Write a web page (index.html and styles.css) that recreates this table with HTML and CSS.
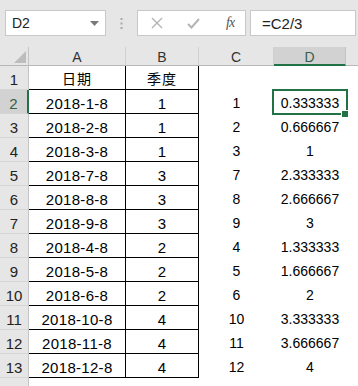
FILE: index.html
```html
<!DOCTYPE html>
<html lang="zh">
<head>
<meta charset="utf-8">
<link rel="stylesheet" href="styles.css">
</head>
<body>
<div class="toolbar">
  <div class="namebox"><span>D2</span><svg class="caret" width="9" height="5" viewBox="0 0 9 5"><path d="M0 0h9L4.5 5z" fill="#7a7a7a"/></svg></div>
  <div class="sep"><svg width="3" height="11" viewBox="0 0 3 11"><rect x="0.5" y="0" width="2" height="2" fill="#a8a8a8"/><rect x="0.5" y="4.5" width="2" height="2" fill="#a8a8a8"/><rect x="0.5" y="9" width="2" height="2" fill="#a8a8a8"/></svg></div>
  <div class="btns">
    <svg class="ico" width="12" height="12" viewBox="0 0 12 12"><path d="M1 1L11 11M11 1L1 11" stroke="#b4b4b4" stroke-width="1.4" fill="none"/></svg>
    <svg class="ico chk" width="13" height="11" viewBox="0 0 13 11"><path d="M1 6L4.5 9.5L12 1" stroke="#b4b4b4" stroke-width="2" fill="none"/></svg>
    <span class="fx">fx</span>
  </div>
  <div class="formula">=C2/3</div>
</div>
<div class="grid">
  <div class="corner"><svg width="12" height="12" viewBox="0 0 12 12"><path d="M12 0V12H0z" fill="#bdbdbd"/></svg></div>
  <div class="ch">A</div><div class="ch">B</div><div class="ch">C</div><div class="ch sel">D</div><div class="ch last"></div>

  <div class="rh">1</div><div class="c t cj">日期</div><div class="c t cj">季度</div><div class="c n"></div><div class="c n"></div><div class="c"></div>
  <div class="rh sel">2</div><div class="c t d">2018-1-8</div><div class="c t">1</div><div class="c n">1</div><div class="c n active">0.333333<span class="handle"></span></div><div class="c"></div>
  <div class="rh">3</div><div class="c t d">2018-2-8</div><div class="c t">1</div><div class="c n">2</div><div class="c n">0.666667</div><div class="c"></div>
  <div class="rh">4</div><div class="c t d">2018-3-8</div><div class="c t">1</div><div class="c n">3</div><div class="c n">1</div><div class="c"></div>
  <div class="rh">5</div><div class="c t d">2018-7-8</div><div class="c t">3</div><div class="c n">7</div><div class="c n">2.333333</div><div class="c"></div>
  <div class="rh">6</div><div class="c t d">2018-8-8</div><div class="c t">3</div><div class="c n">8</div><div class="c n">2.666667</div><div class="c"></div>
  <div class="rh">7</div><div class="c t d">2018-9-8</div><div class="c t">3</div><div class="c n">9</div><div class="c n">3</div><div class="c"></div>
  <div class="rh">8</div><div class="c t d">2018-4-8</div><div class="c t">2</div><div class="c n">4</div><div class="c n">1.333333</div><div class="c"></div>
  <div class="rh">9</div><div class="c t d">2018-5-8</div><div class="c t">2</div><div class="c n">5</div><div class="c n">1.666667</div><div class="c"></div>
  <div class="rh">10</div><div class="c t d">2018-6-8</div><div class="c t">2</div><div class="c n">6</div><div class="c n">2</div><div class="c"></div>
  <div class="rh">11</div><div class="c t d">2018-10-8</div><div class="c t">4</div><div class="c n">10</div><div class="c n">3.333333</div><div class="c"></div>
  <div class="rh">12</div><div class="c t d">2018-11-8</div><div class="c t">4</div><div class="c n">11</div><div class="c n">3.666667</div><div class="c"></div>
  <div class="rh">13</div><div class="c t d">2018-12-8</div><div class="c t">4</div><div class="c n">12</div><div class="c n">4</div><div class="c"></div>
  <div class="rh"></div><div class="c"></div><div class="c"></div><div class="c"></div><div class="c"></div><div class="c"></div>
</div>
</body>
</html>
```
FILE: styles.css
```css
html, body {
  margin: 0;
  padding: 0;
  background: #e6e6e6;
  overflow: hidden;
}
body {
  width: 358px;
  height: 386px;
  font-family: "Liberation Sans", "Noto Sans CJK SC", sans-serif;
  color: #000;
}
.toolbar {
  height: 47px;
  box-sizing: border-box;
  padding: 10px 2px 0 5px;
  display: flex;
  align-items: flex-start;
}
.namebox {
  width: 101px;
  height: 26px;
  box-sizing: border-box;
  background: #fff;
  border: 1px solid #c8c8c8;
  display: flex;
  align-items: center;
  justify-content: space-between;
  padding: 0 6px 0 6px;
  font-size: 14px;
  color: #222;
}
.caret { margin-top: 1px; }
.sep {
  width: 31px;
  height: 26px;
  display: flex;
  align-items: center;
  justify-content: center;
}
.btns {
  width: 109px;
  height: 26px;
  box-sizing: border-box;
  background: #fff;
  border: 1px solid #c8c8c8;
  display: flex;
  align-items: center;
  padding-left: 13px;
}
.ico { display: block; }
.chk { margin-left: 24px; }
.fx {
  margin-left: 26px;
  font-family: "Liberation Serif", serif;
  font-style: italic;
  font-size: 14px;
  color: #555;
  letter-spacing: -1px;
}
.formula {
  flex: 1;
  height: 26px;
  margin-left: 4px;
  box-sizing: border-box;
  background: #fff;
  border: 1px solid #c8c8c8;
  padding-left: 11px;
  font-size: 15px;
  line-height: 25px;
  color: #222;
}
.grid {
  display: grid;
  grid-template-columns: 29px 97px 73px 75px 72px 1fr;
  grid-template-rows: 19px repeat(14, 24px);
  background: #fff;
}
.grid > div {
  box-sizing: border-box;
  overflow: hidden;
  white-space: nowrap;
}
.corner {
  background: #e6e6e6;
  border-right: 1px solid #c4c4c4;
  border-bottom: 1px solid #b8b8b8;
  display: flex;
  align-items: flex-end;
  justify-content: flex-end;
  padding: 0 2px 2px 0;
}
.ch {
  background: #e6e6e6;
  border-right: 1px solid #d0d0d0;
  border-bottom: 1px solid #b8b8b8;
  text-align: center;
  font-size: 14px;
  line-height: 20px;
  color: #333;
}
.ch.sel {
  background: #d2d2d2;
  border-bottom: 2px solid #217346;
  border-right-color: #c4c4c4;
  color: #336148;
}
.ch.last { border-right: none; }
.rh {
  background: #e6e6e6;
  border-right: 1px solid #c4c4c4;
  border-bottom: 1px solid #d4d4d4;
  text-align: center;
  font-size: 15px;
  line-height: 27px;
  color: #222;
}
.rh.sel {
  background: #d2d2d2;
  border-right: 2px solid #217346;
  color: #336148;
}
.c {
  text-align: center;
  font-size: 14px;
  line-height: 27px;
}
.c.t {
  border-right: 1px solid #000;
  border-bottom: 1px solid #000;
  font-size: 15px;
}
.c.d { letter-spacing: 0.3px; }
.c.cj { font-size: 14px; letter-spacing: 1px; }
.c.n { font-size: 14px; }
.c.active {
  position: relative;
  overflow: visible !important;
  z-index: 1;
}
.c.active::before {
  content: "";
  position: absolute;
  left: -2px;
  top: -1px;
  width: 76px;
  height: 26px;
  box-sizing: border-box;
  border: 2px solid #217346;
}
.handle {
  position: absolute;
  right: -3px;
  bottom: -4px;
  width: 6px;
  height: 6px;
  background: #217346;
  border: 1px solid #fff;
}
```
